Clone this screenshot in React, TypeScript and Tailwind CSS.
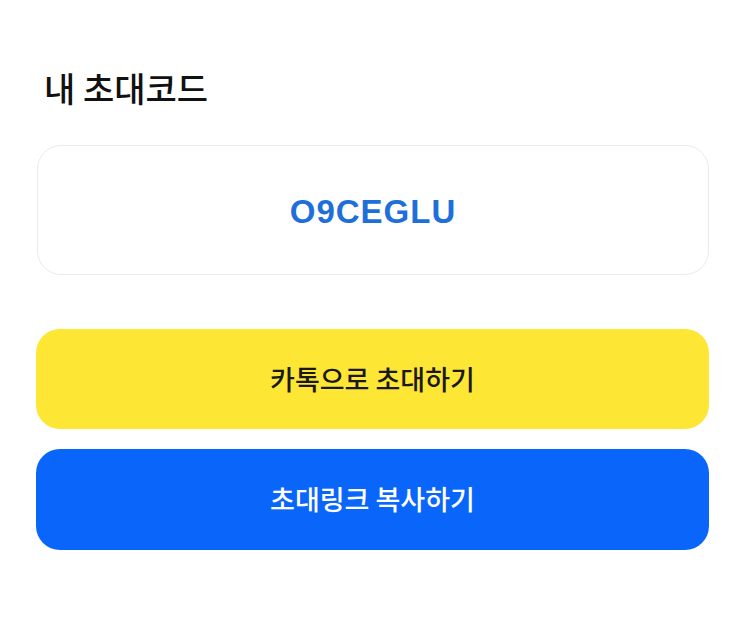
export default function App() {
  return (
    <div
      className="min-h-screen w-full bg-white pl-[36px] pr-[34px] pt-[67px]"
      style={{ fontFamily: '"Noto Sans CJK KR", "Noto Sans", sans-serif' }}
    >
      <h1 className="pl-[8px] text-[34px] font-medium leading-[42px] text-[#111]">내 초대코드</h1>

      <div className="mt-[36px] ml-px flex h-[130px] items-center justify-center rounded-[24px] border border-[#ebebeb] bg-white pt-[4px]">
        <span
          className="text-[33px] font-bold tracking-[1px] text-[#1f6fd8]"
          style={{ fontFamily: '"Liberation Sans", Arial, sans-serif' }}
        >
          O9CEGLU
        </span>
      </div>

      <div className="mt-[54px] flex flex-col gap-[20px]">
        <button className="flex h-[100px] w-full items-center justify-center rounded-[24px] bg-[#fee635] text-[27px] font-medium text-[#191919]">
          카톡으로 초대하기
        </button>
        <button className="flex h-[101px] w-full items-center justify-center rounded-[24px] bg-[#0a66fb] text-[27px] font-medium text-white">
          초대링크 복사하기
        </button>
      </div>
    </div>
  );
}
